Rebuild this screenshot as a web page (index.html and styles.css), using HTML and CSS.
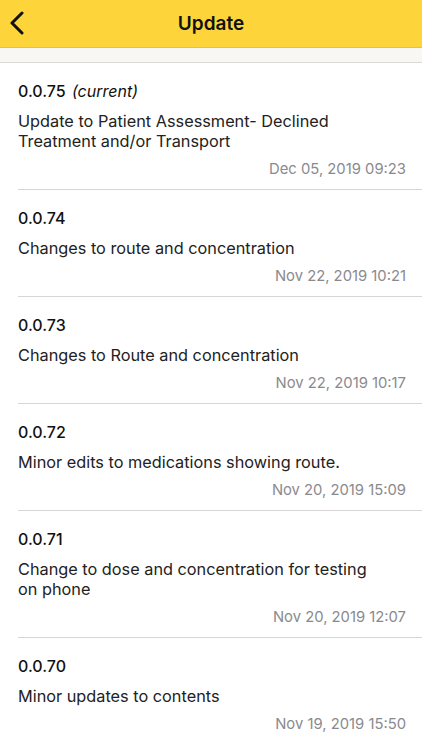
FILE: index.html
```html
<!DOCTYPE html>
<html lang="en">

<head>
    <meta charset="UTF-8" />
    <meta name="viewport" content="width=device-width, initial-scale=1.0" />
    <title>Update</title>
    <link rel="stylesheet" href="styles.css">
</head>

<body>
    <div class="header">
        <a href="#" class="back">
            <svg width="16" height="24" viewBox="0 0 16 24">
                <path d="M13 2 L3 12 L13 22" fill="none" stroke="#111" stroke-width="3" stroke-linecap="round" stroke-linejoin="round" />
            </svg>
        </a>
        <h1>Update</h1>
    </div>

    <div class="strip"></div>

    <div class="list">
        <div class="item">
            <div class="version">0.0.75 <i>(current)</i></div>
            <p>Update to Patient Assessment- Declined Treatment and/or Transport</p>
            <div class="date">Dec 05, 2019 09:23</div>
        </div>
        <div class="item">
            <div class="version">0.0.74</div>
            <p>Changes to route and concentration</p>
            <div class="date">Nov 22, 2019 10:21</div>
        </div>
        <div class="item">
            <div class="version">0.0.73</div>
            <p>Changes to Route and concentration</p>
            <div class="date">Nov 22, 2019 10:17</div>
        </div>
        <div class="item">
            <div class="version">0.0.72</div>
            <p>Minor edits to medications showing route.</p>
            <div class="date">Nov 20, 2019 15:09</div>
        </div>
        <div class="item">
            <div class="version">0.0.71</div>
            <p>Change to dose and concentration for testing on phone</p>
            <div class="date">Nov 20, 2019 12:07</div>
        </div>
        <div class="item">
            <div class="version">0.0.70</div>
            <p>Minor updates to contents</p>
            <div class="date">Nov 19, 2019 15:50</div>
        </div>
    </div>
</body>

</html>
```

FILE: styles.css
```css
* {
    box-sizing: border-box;
    margin: 0;
    padding: 0;
    font-family: Inter, "Liberation Sans", Arial, sans-serif;
}

body {
    background-color: #fff;
    color: #111;
}

.header {
    height: 48px;
    background-color: #fdd53a;
    border-bottom: 1px solid #e8c233;
    display: flex;
    align-items: center;
    justify-content: center;
    position: relative;
}

.header h1 {
    font-size: 19px;
    font-weight: 600;
    color: #111;
}

.back {
    position: absolute;
    left: 9px;
    top: 11px;
    display: flex;
}

.strip {
    height: 15px;
    background-color: #f8f7f4;
    border-bottom: 1px solid #d9d9d9;
}

.item {
    padding: 18px 16px 11px 18px;
    position: relative;
}

.item::after {
    content: "";
    position: absolute;
    left: 18px;
    right: 0;
    bottom: 0;
    height: 1px;
    background-color: #d6d6d6;
}

.item:last-child::after {
    display: none;
}

.version {
    font-size: 16px;
    line-height: 20px;
    font-weight: 500;
}

.version i {
    font-weight: normal;
    margin-left: 2px;
}

.item p {
    font-size: 16.3px;
    line-height: 20px;
    margin-top: 10px;
    padding-right: 30px;
    color: #222;
}

.date {
    font-size: 14.8px;
    line-height: 20px;
    margin-top: 8px;
    text-align: right;
    color: #8a8a8e;
}
```
